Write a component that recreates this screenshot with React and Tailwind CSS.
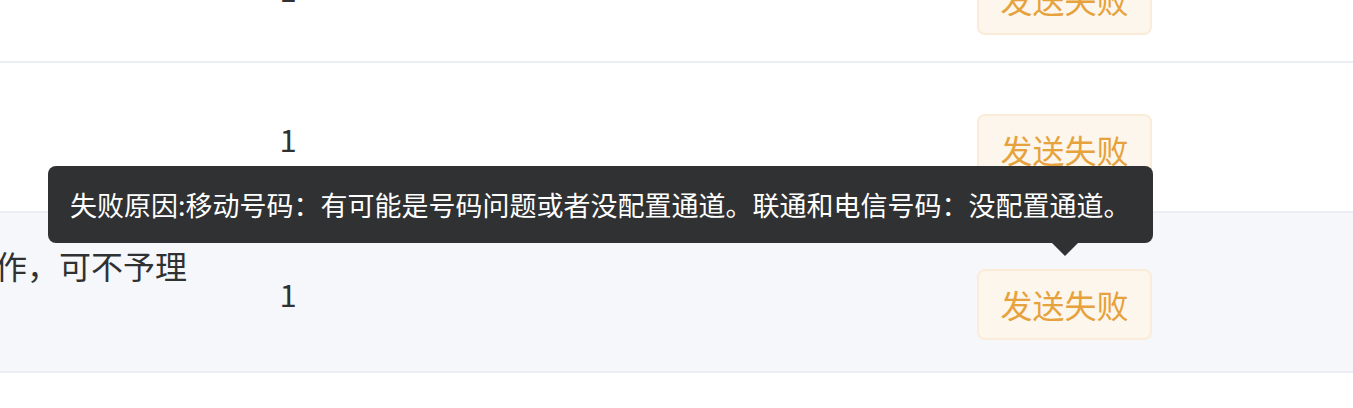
import React from "react";

const FONT = { fontFamily: '"Noto Sans CJK SC", "Noto Sans", sans-serif' };

/* -------- TABLE ROWS (DUMMY) -------- */
const rows = [
  { id: 1, text: "", count: 1, status: "发送失败", height: "h-[150px] -mt-[87px]", hover: false },
  { id: 2, text: "", count: 1, status: "发送失败", height: "h-[150px]", hover: false },
  { id: 3, text: "您的验证码已发送，如非本人操作，可不予理", count: 1, status: "发送失败", height: "h-[160px]", hover: true },
];

const StatusTag = ({ label }) => (
  <span className="mt-[24px] w-[175px] h-[71px] flex items-center justify-center rounded-[8px] border-2 border-[#faecd8] bg-[#fdf6ec] text-[#e6a23c] text-[32px] leading-none">
    {label}
  </span>
);

const Row = ({ row }) => (
  <div
    className={`flex border-b-2 border-[#ebeef5] ${row.height} ${
      row.hover ? "bg-[#f5f7fa]" : "bg-white"
    }`}
  >
    {/* content column, clipped on the left */}
    <div className="w-[187px] shrink-0 flex justify-end overflow-hidden whitespace-nowrap pt-[30px] text-[32px] leading-[45px] text-[#303133]">
      {row.text && <span>{row.text}</span>}
    </div>

    {/* count */}
    <div className="w-[202px] shrink-0 flex items-center justify-center text-[31px] text-[#303133]">
      <span className="mt-[4px]">{row.count}</span>
    </div>

    <div className="w-[588px] shrink-0" />

    {/* status */}
    <div className="flex-1 flex items-center">
      <StatusTag label={row.status} />
    </div>
  </div>
);

export default function App() {
  return (
    <div className="relative w-[1353px] h-[408px] overflow-hidden bg-white" style={FONT}>
      {rows.map((row) => (
        <Row key={row.id} row={row} />
      ))}

      {/* ---------- TOOLTIP ---------- */}
      <div className="absolute left-[48px] top-[166px] w-[1105px]">
        <div className="h-[77px] flex items-center px-[22px] rounded-[8px] bg-[#303133] text-white text-[27px] leading-none whitespace-nowrap">
          失败原因:移动号码：有可能是号码问题或者没配置通道。联通和电信号码：没配置通道。
        </div>
        <div className="absolute top-[77px] left-[1004px] w-0 h-0 border-l-[13px] border-r-[13px] border-t-[13px] border-l-transparent border-r-transparent border-t-[#303133]" />
      </div>
    </div>
  );
}
